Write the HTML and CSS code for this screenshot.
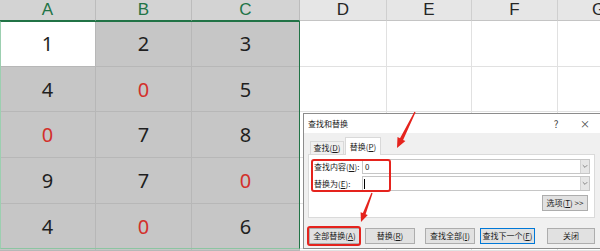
FILE: index.html
```html
<!DOCTYPE html>
<html lang="zh-CN">
<head>
    <meta charset="UTF-8">
    <title>查找和替换</title>
    <link rel="stylesheet" href="styles.css">
</head>
<body>

    <div class="sheet">
        <div class="hd sel">A</div><div class="hd sel">B</div><div class="hd sel">C</div>
        <div class="hd">D</div><div class="hd">E</div><div class="hd">F</div><div class="hd">G</div>

        <div class="cell sel active">1</div><div class="cell sel">2</div><div class="cell sel">3</div>
        <div class="cell"></div><div class="cell"></div><div class="cell"></div><div class="cell"></div>

        <div class="cell sel">4</div><div class="cell sel zero">0</div><div class="cell sel">5</div>
        <div class="cell"></div><div class="cell"></div><div class="cell"></div><div class="cell"></div>

        <div class="cell sel zero">0</div><div class="cell sel">7</div><div class="cell sel">8</div>
        <div class="cell"></div><div class="cell"></div><div class="cell"></div><div class="cell"></div>

        <div class="cell sel">9</div><div class="cell sel">7</div><div class="cell sel zero">0</div>
        <div class="cell"></div><div class="cell"></div><div class="cell"></div><div class="cell"></div>

        <div class="cell sel">4</div><div class="cell sel zero">0</div><div class="cell sel">6</div>
        <div class="cell"></div><div class="cell"></div><div class="cell"></div><div class="cell"></div>

        <div class="cell sel"></div><div class="cell sel"></div><div class="cell sel"></div>
        <div class="cell"></div><div class="cell"></div><div class="cell"></div><div class="cell"></div>

        <!-- selection frame over A1:C5 -->
        <div class="selection"></div>
    </div>

    <div class="dialog">
        <div class="dialog-title">
            <span>查找和替换</span>
            <div class="title-actions"><span>?</span><span>×</span></div>
        </div>
        <div class="dialog-body">
            <div class="tabs">
                <div class="tab">查找(<u>D</u>)</div>
                <div class="tab active">替换(<u>P</u>)</div>
            </div>
            <div class="panel">
                <div class="field">
                    <label>查找内容(<u>N</u>):</label>
                    <div class="combo">
                        <span class="combo-text">0</span>
                        <span class="combo-arrow"><svg width="9" height="13" viewBox="0 0 9 13"><polyline points="2,5 4.5,7.5 7,5" fill="none" stroke="#7a7a7a" stroke-width="1"/></svg></span>
                    </div>
                </div>
                <div class="field">
                    <label>替换为(<u>E</u>):</label>
                    <div class="combo">
                        <span class="combo-text"><span class="caret"></span></span>
                        <span class="combo-arrow"><svg width="9" height="13" viewBox="0 0 9 13"><polyline points="2,5 4.5,7.5 7,5" fill="none" stroke="#7a7a7a" stroke-width="1"/></svg></span>
                    </div>
                </div>
                <div class="options-row">
                    <div class="btn btn-options">选项(<u>T</u>) &gt;&gt;</div>
                </div>
            </div>
            <div class="footer">
                <div class="btn btn-replace-all">全部替换(<u>A</u>)</div>
                <div class="btn">替换(<u>R</u>)</div>
                <div class="btn group-start">查找全部(<u>I</u>)</div>
                <div class="btn btn-next">查找下一个(<u>F</u>)</div>
                <div class="btn btn-close">关闭</div>
            </div>
        </div>
    </div>

    <!-- red annotations drawn over the screenshot -->
    <svg class="marks" width="600" height="251" viewBox="0 0 600 251">
        <rect x="312" y="160" width="78" height="31" rx="2" fill="none" stroke="#e5231d" stroke-width="2"/>
        <rect x="308" y="227" width="52" height="18" rx="2" fill="none" stroke="#e5231d" stroke-width="2"/>
        <polygon fill="#e5231d" points="415.6,112.3 403.1,139.9 405.4,141.1 397,148 397.5,137.1 400.0,138.3 414.4,111.7"/>
        <polygon fill="#e5231d" points="372.6,193.2 365.6,214.2 367.8,214.9 361,222 360.6,212.3 362.9,213.1 371.4,192.8"/>
    </svg>

</body>
</html>
```

FILE: styles.css
```css
* {
    margin: 0;
    padding: 0;
    box-sizing: border-box;
}

body {
    width: 600px;
    height: 251px;
    overflow: hidden;
    position: relative;
    background: #fff;
    font-family: "Noto Sans", "Noto Sans CJK SC", sans-serif;
}

/* spreadsheet */
.sheet {
    display: grid;
    grid-template-columns: 96px 96px 108px 87px 85px 86px 82px;
    grid-template-rows: 21px 46px 45px 46px 46px 45px 2px;
    width: 640px;
    position: relative;
}

.hd {
    display: flex;
    align-items: center;
    justify-content: center;
    background: #e6e6e6;
    color: #262626;
    font-family: "Liberation Sans", sans-serif;
    font-size: 17px;
    line-height: 20px;
    border-right: 1px solid #cfcfcf;
    border-bottom: 1px solid #c4c4c4;
}

.hd.sel {
    background: #d3d3d3;
    color: #217346;
    border-right-color: #bcbcbc;
    border-bottom-color: #217346;
}

.cell {
    display: flex;
    align-items: center;
    justify-content: center;
    font-size: 20px;
    color: #1f1f1f;
    border-right: 1px solid #e1e1e1;
    border-bottom: 1px solid #e1e1e1;
}

.cell.sel {
    background: #c6c6c6;
    border-color: #b7b7b7;
}

.cell.active {
    background: #fff;
}

.cell.zero {
    color: #d3302c;
}

.selection {
    position: absolute;
    grid-column: 1 / 4;
    grid-row: 2 / 7;
    inset: 0;
    border: 1px solid #217346;
    border-left-color: #9ccfb0;
    border-bottom-color: #8cc5a2;
}

/* find & replace dialog */
.dialog {
    position: absolute;
    left: 303px;
    top: 113px;
    width: 300px;
    height: 136px;
    background: #f0f0f0;
    border: 1px solid #8c8c8c;
    font-family: "Noto Sans CJK SC", sans-serif;
    font-size: 8px;
    line-height: 1;
    color: #1a1a1a;
}

.dialog u {
    text-decoration: underline;
}

.dialog-title {
    height: 19px;
    background: #fff;
    display: flex;
    align-items: center;
    justify-content: space-between;
    padding-left: 4px;
}

.title-actions {
    display: flex;
    gap: 19px;
    margin-right: 12px;
    font-size: 10px;
    color: #444;
}

.title-actions span {
    width: 10px;
    text-align: center;
}

.dialog-body {
    padding: 4px 7px 0 4px;
}

.tabs {
    display: flex;
    align-items: flex-end;
    gap: 1px;
    height: 17px;
    margin-left: 2px;
}

.tab {
    width: 34px;
    height: 13px;
    display: flex;
    align-items: center;
    justify-content: center;
    border: 1px solid #d9d9d9;
    border-bottom: none;
    background: #f0f0f0;
}

.tab.active {
    width: 36px;
    height: 18px;
    margin-bottom: -1px;
    background: #fff;
    position: relative;
    z-index: 1;
}

.panel {
    height: 64px;
    background: #fff;
    border: 1px solid #dadada;
    padding: 4px 4px 0 5px;
}

.field {
    display: flex;
    align-items: center;
    height: 15px;
    margin-bottom: 2px;
}

.field label {
    width: 48px;
}

.combo {
    flex: 1;
    height: 15px;
    display: flex;
    align-items: center;
    border: 1px solid #c6c6c6;
}

.combo-text {
    flex: 1;
    padding-left: 2px;
    display: flex;
    align-items: center;
}

.caret {
    width: 1px;
    height: 10px;
    margin-left: -1px;
    background: #000;
}

.combo-arrow {
    width: 9px;
    height: 13px;
    background: #e6e6e6;
    border-left: 1px solid #d2d2d2;
    display: flex;
}

.options-row {
    display: flex;
    justify-content: flex-end;
    margin-top: 4px;
    padding-right: 2px;
}

.btn {
    width: 50px;
    height: 16px;
    display: flex;
    align-items: center;
    justify-content: center;
    background: #e1e1e1;
    border: 1px solid #adadad;
    white-space: nowrap;
}

.btn-options {
    width: 46px;
}

.footer {
    display: flex;
    gap: 5px;
    margin-top: 10px;
    margin-left: 1px;
}

.btn-replace-all {
    width: 51px;
}

.group-start {
    margin-left: 5px;
}

.btn-next {
    width: 55px;
    border-color: #0078d7;
}

.btn-close {
    width: 48px;
    margin-left: 7px;
}

.marks {
    position: absolute;
    left: 0;
    top: 0;
    pointer-events: none;
}
```
